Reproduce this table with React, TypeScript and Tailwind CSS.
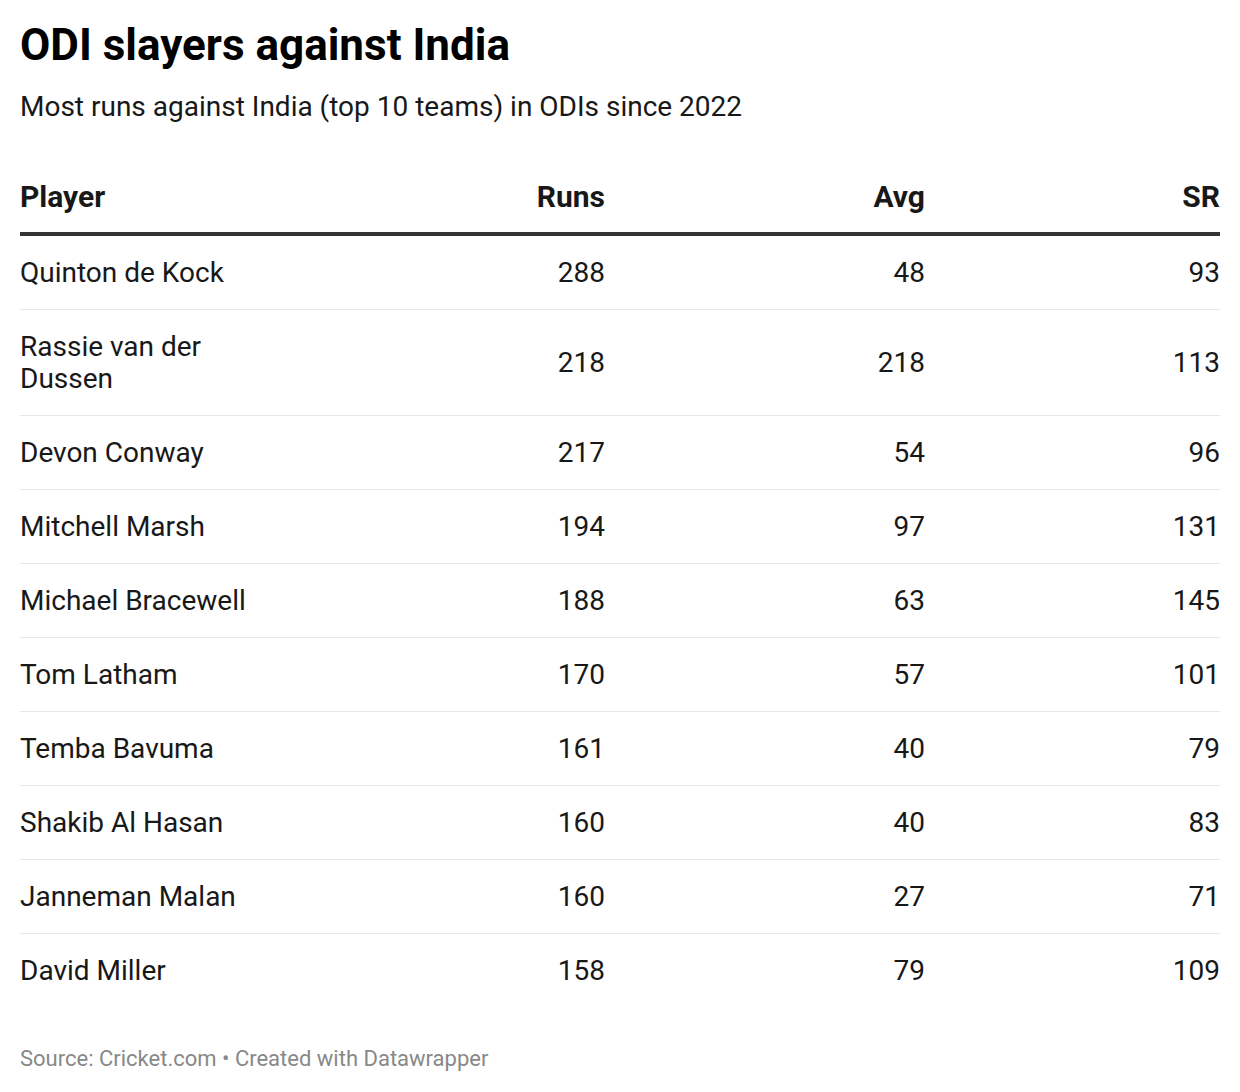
const rows = [
  { player: "Quinton de Kock", runs: 288, avg: 48, sr: 93 },
  { player: "Rassie van der Dussen", runs: 218, avg: 218, sr: 113 },
  { player: "Devon Conway", runs: 217, avg: 54, sr: 96 },
  { player: "Mitchell Marsh", runs: 194, avg: 97, sr: 131 },
  { player: "Michael Bracewell", runs: 188, avg: 63, sr: 145 },
  { player: "Tom Latham", runs: 170, avg: 57, sr: 101 },
  { player: "Temba Bavuma", runs: 161, avg: 40, sr: 79 },
  { player: "Shakib Al Hasan", runs: 160, avg: 40, sr: 83 },
  { player: "Janneman Malan", runs: 160, avg: 27, sr: 71 },
  { player: "David Miller", runs: 158, avg: 79, sr: 109 },
];

const App = () => {
  return (
    <div className="w-[1240px] min-h-[1092px] bg-white px-5 pt-[17px] font-['Roboto',sans-serif] text-[#181818]">
      {/* Header */}
      <h1 className="text-[44px] leading-[56px] font-bold text-black">ODI slayers against India</h1>
      <p className="mt-[18px] text-[28px] leading-[32px] text-[#181818]">
        Most runs against India (top 10 teams) in ODIs since 2022
      </p>

      {/* Table */}
      <div className="mt-[58px]">
        <div className="grid grid-cols-[240px_345px_320px_295px] items-center border-b-4 border-[#333] pb-[19px] text-[30px] leading-[32px] font-bold">
          <div>Player</div>
          <div className="text-right">Runs</div>
          <div className="text-right">Avg</div>
          <div className="text-right">SR</div>
        </div>
        {rows.map((row, i) => (
          <div
            key={i}
            className={`grid grid-cols-[240px_345px_320px_295px] items-center pt-[21px] pb-[20px] text-[28px] leading-[32px] ${
              i < rows.length - 1 ? "border-b border-[#e6e6e6]" : ""
            }`}
          >
            <div>{row.player}</div>
            <div className="text-right">{row.runs}</div>
            <div className="text-right">{row.avg}</div>
            <div className="text-right">{row.sr}</div>
          </div>
        ))}
      </div>

      {/* Footer */}
      <p className="mt-[38px] text-[22px] leading-[28px] text-[#888]">
        Source: Cricket.com • Created with Datawrapper
      </p>
    </div>
  );
};

export default App;
